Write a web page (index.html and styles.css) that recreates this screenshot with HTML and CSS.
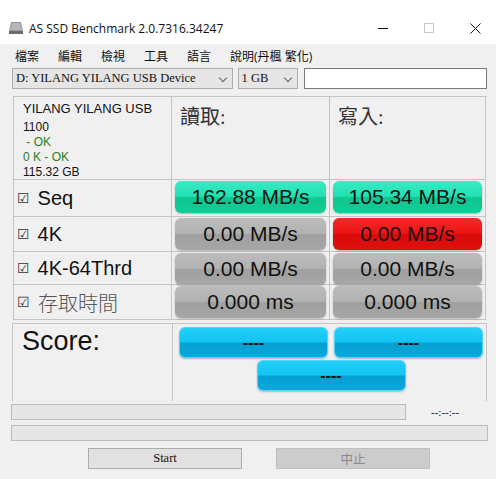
FILE: index.html
```html
<!DOCTYPE html>
<html lang="zh-Hant">
<head>
    <meta charset="UTF-8">
    <title>AS SSD Benchmark</title>
    <link rel="stylesheet" href="styles.css">
</head>
<body>
    <div class="window">
        <div class="titlebar">
            <svg class="app-icon" width="16" height="14" viewBox="0 0 16 14">
                <path d="M3 1 H13 L15 10 H1 Z" fill="#9a9a9a"/>
                <path d="M4 2 H12 L13.5 9 H2.5 Z" fill="#b8b8b8"/>
                <rect x="1" y="10" width="14" height="3" fill="#6e6e6e"/>
            </svg>
            <span class="title">AS SSD Benchmark 2.0.7316.34247</span>
            <div class="controls">
                <svg width="11" height="11" viewBox="0 0 11 11"><path d="M0 5.5 H10" stroke="#111" stroke-width="1"/></svg>
                <svg width="11" height="11" viewBox="0 0 11 11"><rect x="0.5" y="0.5" width="9" height="9" fill="none" stroke="#c8c8c8"/></svg>
                <svg width="11" height="11" viewBox="0 0 11 11"><path d="M0.5 0.5 L10.5 10.5 M10.5 0.5 L0.5 10.5" stroke="#111" stroke-width="1"/></svg>
            </div>
        </div>

        <div class="client">
            <div class="menu">
                <span>檔案</span>
                <span>編輯</span>
                <span>檢視</span>
                <span>工具</span>
                <span>語言</span>
                <span>說明(丹楓 繁化)</span>
            </div>

            <div class="toolbar">
                <div class="combo drive">D: YILANG YILANG USB Device<span class="chev"></span></div>
                <div class="combo size">1 GB<span class="chev"></span></div>
                <div class="textbox"></div>
            </div>

            <div class="grid">
                <div class="cell info">
                    <div class="dev">YILANG YILANG USB</div>
                    <div>1100</div>
                    <div class="ok">&nbsp;- OK</div>
                    <div class="ok">0 K - OK</div>
                    <div>115.32 GB</div>
                </div>
                <div class="cell head">讀取:</div>
                <div class="cell head">寫入:</div>

                <div class="cell label"><span class="check">☑</span>Seq</div>
                <div class="cell"><div class="bar green">162.88 MB/s</div></div>
                <div class="cell"><div class="bar green">105.34 MB/s</div></div>

                <div class="cell label"><span class="check">☑</span>4K</div>
                <div class="cell"><div class="bar gray">0.00 MB/s</div></div>
                <div class="cell"><div class="bar red">0.00 MB/s</div></div>

                <div class="cell label"><span class="check">☑</span>4K-64Thrd</div>
                <div class="cell"><div class="bar gray">0.00 MB/s</div></div>
                <div class="cell"><div class="bar gray">0.00 MB/s</div></div>

                <div class="cell label cjk"><span class="check">☑</span>存取時間</div>
                <div class="cell"><div class="bar gray">0.000 ms</div></div>
                <div class="cell"><div class="bar gray">0.000 ms</div></div>
            </div>

            <div class="score">
                <div class="score-label">Score:</div>
                <div class="score-bars">
                    <div class="bar blue">----</div>
                    <div class="bar blue">----</div>
                    <div class="bar blue total">----</div>
                </div>
            </div>

            <div class="progress-row">
                <div class="progress short"></div>
                <span class="time">--:--:--</span>
            </div>
            <div class="progress"></div>

            <div class="buttons">
                <button class="btn">Start</button>
                <button class="btn disabled">中止</button>
            </div>
        </div>
    </div>
</body>
</html>
```

FILE: styles.css
```css
body {
    margin: 0;
    width: 496px;
    height: 496px;
    background-color: white;
    font-family: "Open Sans", "Noto Sans CJK TC", sans-serif;
    overflow: hidden;
}

.window {
    width: 496px;
}

.titlebar {
    height: 44px;
    display: flex;
    align-items: center;
    padding-top: 12px;
    box-sizing: border-box;
    background-color: white;
}

.app-icon {
    margin-left: 8px;
    margin-right: 5px;
}

.title {
    font-size: 12px;
    color: #111;
}

.controls {
    margin-left: auto;
    display: flex;
    gap: 35px;
    margin-right: 15px;
}

.client {
    background-color: #f0f0f0;
    height: 435px;
    padding: 0 9px 0 11px;
    box-sizing: border-box;
}

.menu {
    height: 23px;
    display: flex;
    align-items: center;
    gap: 19px;
    padding-left: 4px;
    font-size: 12px;
    color: #111;
}

.toolbar {
    display: flex;
    margin-top: 1px;
    height: 21px;
}

.combo {
    border: 1px solid #adadad;
    background-color: #e5e5e5;
    font-family: "Liberation Serif", "Noto Sans CJK TC", serif;
    font-size: 12.5px;
    line-height: 19px;
    padding-left: 3px;
    position: relative;
    box-sizing: border-box;
    color: #111;
}

.drive {
    width: 221px;
    margin-left: 1px;
}

.size {
    width: 61px;
    margin-left: 5px;
}

.chev {
    position: absolute;
    right: 6px;
    top: 6px;
    width: 5px;
    height: 5px;
    border-right: 1px solid #666;
    border-bottom: 1px solid #666;
    transform: rotate(45deg);
}

.textbox {
    width: 183px;
    margin-left: 6px;
    border: 1px solid #7a7a7a;
    background-color: white;
    box-sizing: border-box;
}

.grid {
    margin-top: 7px;
    margin-left: 2px;
    display: grid;
    grid-template-columns: 158px 158px 156px;
    grid-template-rows: 83px 37px 35px 33px 35px;
    border-top: 1px solid #c4c4c4;
    border-left: 1px solid #c4c4c4;
    width: 473px;
}

.cell {
    border-right: 1px solid #c4c4c4;
    border-bottom: 1px solid #c4c4c4;
    padding: 1px 3px 1px 3px;
    box-sizing: border-box;
}

.info {
    padding: 3px 0 0 9px;
    font-family: "Liberation Sans", "Noto Sans CJK TC", sans-serif;
    font-size: 12px;
    line-height: 15px;
    color: #111;
}

.info .dev {
    font-size: 13px;
    line-height: 18px;
    margin-bottom: 2px;
}

.ok {
    color: #2a7f1a;
}

.head {
    font-family: "Liberation Serif", "Noto Sans CJK TC", serif;
    font-size: 20px;
    color: #333;
    padding: 4px 0 0 8px;
}

.label {
    display: flex;
    align-items: center;
    font-family: "Liberation Sans", "Noto Sans CJK TC", sans-serif;
    font-size: 20px;
    color: #111;
    padding-left: 3px;
}

.label.cjk {
    color: #555;
    font-weight: 300;
}

.check {
    font-family: "DejaVu Sans", sans-serif;
    font-size: 14px;
    color: #333;
    margin-right: 8px;
}

.bar {
    height: 32px;
    border-radius: 6px;
    display: flex;
    align-items: center;
    justify-content: center;
    font-family: "Liberation Sans", sans-serif;
    font-size: 21px;
    color: #111;
    box-shadow: 0 1px 2px rgba(0,0,0,0.25);
}

.green {
    background: linear-gradient(#38ecc4 0%, #22e0b2 48%, #10c690 52%, #12cb95 100%);
}

.gray {
    background: linear-gradient(#bcbcbc 0%, #b2b2b2 48%, #a0a0a0 52%, #a6a6a6 100%);
}

.red {
    background: linear-gradient(#f52a2a 0%, #ec1414 48%, #d80a0a 52%, #de1010 100%);
}

.blue {
    background: linear-gradient(#22d0f8 0%, #12c4f2 48%, #069fd2 52%, #0aa8dc 100%);
    font-size: 16px;
    font-weight: bold;
    height: 31px;
    border: 1px solid #4cd6fa;
    box-sizing: border-box;
}

.score {
    margin-top: 3px;
    margin-left: 1px;
    display: grid;
    grid-template-columns: 160px 314px;
    height: 78px;
    border: 1px solid #c4c4c4;
    border-bottom: none;
    box-sizing: border-box;
    width: 475px;
}

.score-label {
    border-right: 1px solid #c4c4c4;
    font-family: "Liberation Sans", sans-serif;
    font-size: 27px;
    color: #111;
    padding: 2px 0 0 9px;
}

.score-bars {
    display: grid;
    grid-template-columns: 149px 149px;
    column-gap: 6px;
    row-gap: 2px;
    padding: 3px 0 0 6px;
    align-content: start;
}

.score-bars .total {
    grid-column: 1 / span 2;
    width: 149px;
    justify-self: center;
}

.progress-row {
    display: flex;
    align-items: center;
    margin-top: 3px;
}

.progress {
    height: 16px;
    border: 1px solid #bcbcbc;
    background-color: #e6e6e6;
    box-sizing: border-box;
    width: 477px;
}

.progress-row .progress {
    width: 395px;
}

.progress-row + .progress {
    margin-top: 5px;
}

.time {
    font-family: "Liberation Serif", serif;
    font-size: 11px;
    margin-left: 25px;
    color: #111;
}

.buttons {
    display: flex;
    margin-top: 7px;
    padding-left: 77px;
    gap: 34px;
}

.btn {
    width: 154px;
    height: 21px;
    border: 1px solid #adadad;
    background-color: #e1e1e1;
    font-family: "Liberation Serif", "Noto Sans CJK TC", serif;
    font-size: 12.5px;
    color: #111;
    padding: 0;
}

.btn.disabled {
    background-color: #cccccc;
    border-color: #bfbfbf;
    color: #8a8a8a;
}
```
